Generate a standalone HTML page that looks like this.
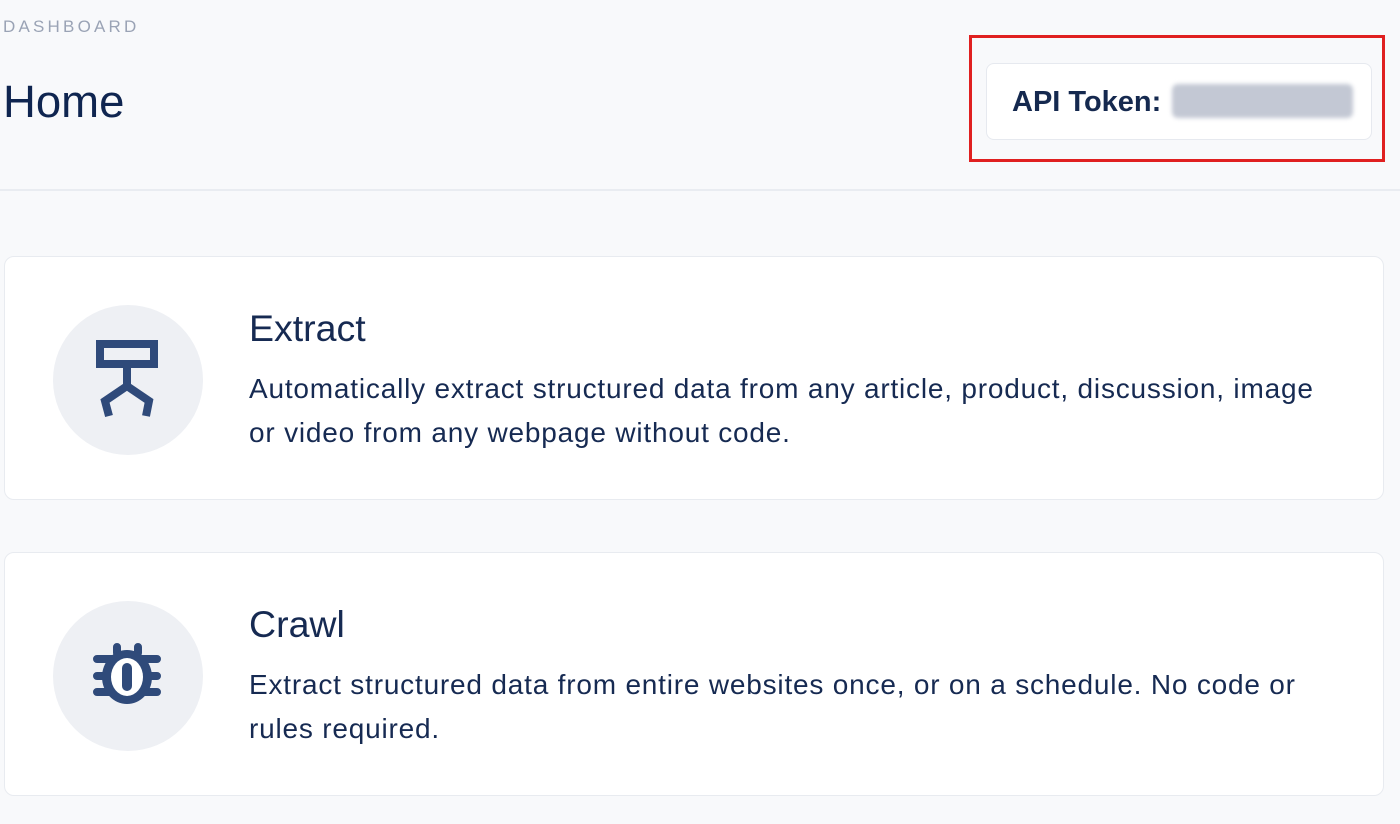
<!DOCTYPE html><html><head><style>
body{margin:0;width:1400px;height:824px;background:#f8f9fb;font-family:"Liberation Sans",sans-serif;color:#162a52;position:relative;overflow:hidden}
.a{position:absolute}
.card{position:absolute;left:4px;width:1380px;height:244px;background:#fff;border:1px solid #e8ebf0;border-radius:10px;box-sizing:border-box}
.circ{position:absolute;left:48px;width:150px;height:150px;border-radius:50%;background:#eef0f4}
h2{position:absolute;left:244px;margin:0;font-weight:400;font-size:37.5px}
p{position:absolute;left:244px;margin:0;font-size:28px;letter-spacing:0.8px;line-height:44px;width:1080px}
</style></head><body>
<div class="a" style="left:3px;top:17px;font-size:17px;letter-spacing:3.2px;color:#9aa3b5">DASHBOARD</div>
<div class="a" style="left:3px;top:76px;font-size:45.5px;color:#0f2550">Home</div>
<div class="a" style="left:0;top:189px;width:1400px;height:2px;background:#e9ecf1"></div>
<div class="a" style="left:969px;top:35px;width:410px;height:121px;border:3px solid #e02020"></div>
<div class="a" style="left:986px;top:63px;width:386px;height:77px;background:#fff;border:1px solid #e6e9ef;border-radius:8px;box-sizing:border-box"></div>
<div class="a" style="left:1012px;top:86px;font-size:29px;font-weight:700;color:#15294f">API Token:</div>
<div class="a" style="left:1172px;top:84px;width:181px;height:34px;background:#c3c8d4;border-radius:6px;filter:blur(2px)"></div>
<div class="card" style="top:256px"><div class="circ" style="top:48px"></div>
<svg class="a" style="left:0;top:0" width="200" height="244"><g fill="none" stroke="#2f4a7a" stroke-width="8" transform="translate(-4,-256)"><rect x="99" y="343" width="54" height="20"/><path d="M126 367V385L104 400L108 415M126 385L148 400L145 415"/></g></svg>
<h2 style="top:50px">Extract</h2>
<p style="top:110px">Automatically extract structured data from any article, product, discussion, image or video from any webpage without code.</p></div>
<div class="card" style="top:552px"><div class="circ" style="top:48px"></div>
<svg class="a" style="left:0;top:0" width="200" height="244"><g transform="translate(-4,-552)" fill="#2f4a7a"><g stroke="#2f4a7a" stroke-width="8" stroke-linecap="round"><path d="M96 658H156M96 675H156M96 691H156M116 646V652M137 646V652"/></g><ellipse cx="126" cy="676" rx="25" ry="27"/><ellipse cx="126" cy="676" rx="16" ry="19" fill="#fff"/><rect x="121" y="662" width="10" height="28" rx="5"/></g></svg>
<h2 style="top:50px">Crawl</h2>
<p style="top:110px">Extract structured data from entire websites once, or on a schedule. No code or rules required.</p></div>
</body></html>
